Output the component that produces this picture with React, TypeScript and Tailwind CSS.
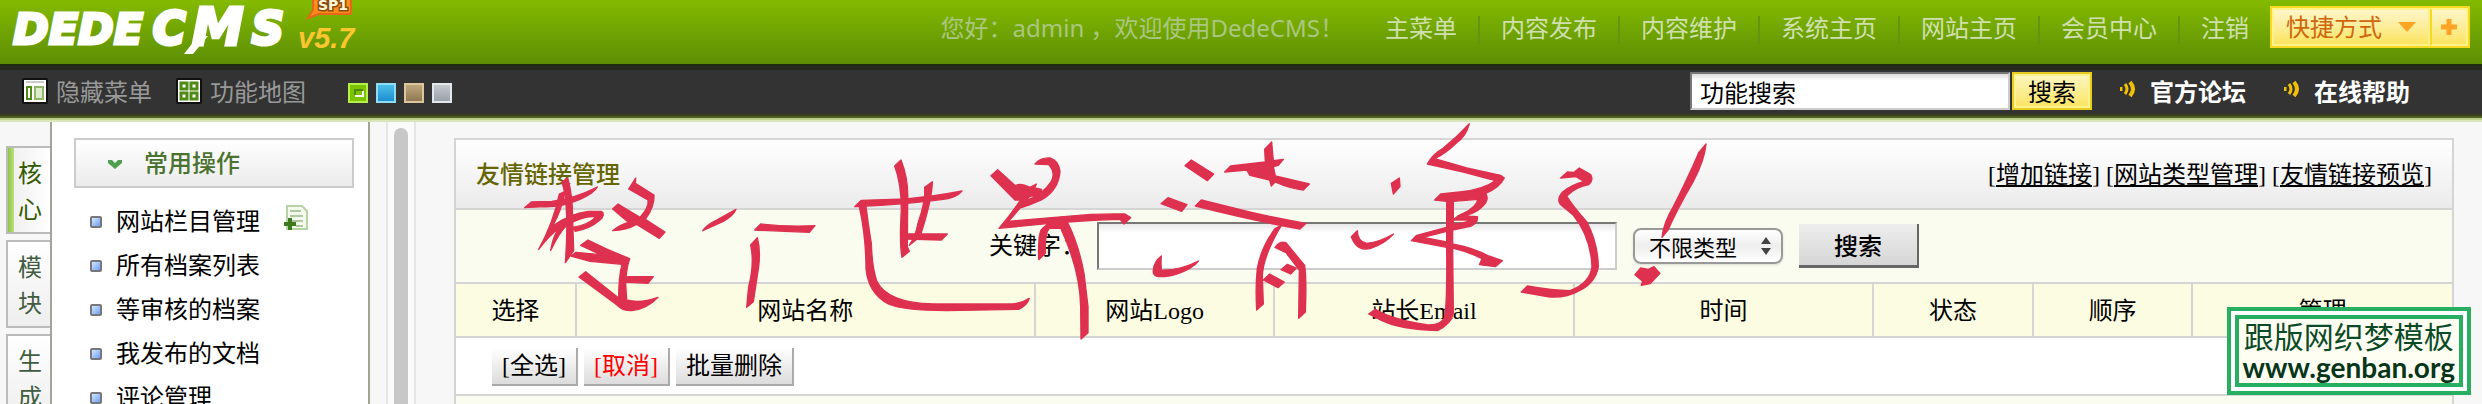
const navLinks = ["主菜单", "内容发布", "内容维护", "系统主页", "网站主页", "会员中心", "注销"];

const tabs = ["核心", "模块", "生成"];

const menuItems = ["网站栏目管理", "所有档案列表", "等审核的档案", "我发布的文档", "评论管理"];

const columns = [
  { name: "选择", width: "w-[6%]" },
  { name: "网站名称", width: "w-[23%]" },
  { name: "网站Logo", width: "w-[12%]" },
  { name: "站长Email", width: "w-[15%]" },
  { name: "时间", width: "w-[15%]" },
  { name: "状态", width: "w-[8%]" },
  { name: "顺序", width: "w-[8%]" },
  { name: "管理", width: "w-[13%]" },
];

function Logo() {
  return (
    <svg width="370" height="64" viewBox="0 0 370 64" className="shrink-0" role="img" aria-label="DedeCMS v5.7 SP1">
      <g fontFamily="DejaVu Sans" fontWeight="700" fontStyle="italic" fill="#fff" stroke="#fff">
        <text x="13" y="44" fontSize="43" strokeWidth="3">DEDE</text>
        <text x="153" y="44" fontSize="44" strokeWidth="4">C</text>
        <text x="192" y="45" fontSize="52" strokeWidth="3">M</text>
        <text x="252" y="44" fontSize="44" strokeWidth="4">S</text>
      </g>
      <path d="M198 36 L208 36 L193 54 L184 54 Z" fill="#fff" />
      <text x="298" y="48" fontFamily="Liberation Sans" fontWeight="700" fontStyle="italic" fontSize="29" fill="#fbc62f">
        v5.7
      </text>
      <path d="M313 -2 H351 V12 Q351 14 349 14 H319 L308 18 L313 10 Z" fill="#ff8d1c" stroke="#e8661a" strokeWidth="2" />
      <text x="318" y="10" fontFamily="DejaVu Sans" fontWeight="700" fontSize="14" fill="#fff8d8" stroke="#8a4a10" strokeWidth="3" paintOrder="stroke">
        SP1
      </text>
    </svg>
  );
}

function SoundIcon() {
  return (
    <svg width="16" height="18" viewBox="0 0 16 18" fill="none" stroke="#f0bf08" className="mb-1">
      <path d="M1 7v4" strokeWidth="3" />
      <path d="M5 4q4 5 0 10" strokeWidth="3" />
      <path d="M10 2q6 7 0 14" strokeWidth="4" />
    </svg>
  );
}

function PanelIcon() {
  return (
    <svg width="26" height="26" viewBox="0 0 26 26">
      <rect width="26" height="26" rx="2" fill="#111" />
      <rect x="2" y="2" width="22" height="22" fill="#fff" />
      <path d="M4 4h18" stroke="#ccc" strokeWidth="2" />
      <rect x="5" y="9" width="4" height="12" fill="none" stroke="#4e8a14" strokeWidth="2" />
      <rect x="13" y="9" width="8" height="12" fill="#dceccb" stroke="#8fb765" strokeWidth="2" />
    </svg>
  );
}

function MapIcon() {
  return (
    <svg width="26" height="26" viewBox="0 0 26 26">
      <rect width="26" height="26" rx="2" fill="#111" />
      <rect x="2" y="2" width="22" height="22" fill="#fff" />
      <g fill="#fff" stroke="#4e8a14" strokeWidth="3">
        <rect x="5" y="5" width="6" height="6" />
        <rect x="15" y="5" width="6" height="6" />
        <rect x="5" y="15" width="6" height="6" />
        <rect x="15" y="15" width="6" height="6" />
      </g>
    </svg>
  );
}

function Header() {
  return (
    <header className="flex h-16 shrink-0 items-start bg-linear-to-b from-[#84ba00] to-[#5d8e05] pr-3 font-['Noto_Sans','Noto_Sans_CJK_SC',sans-serif] text-2xl leading-6 whitespace-nowrap">
      <Logo />
      <p className="mt-4 mr-5 ml-auto text-[#aac780]">您好：admin ，欢迎使用DedeCMS！</p>
      <nav className="mt-4 flex divide-x-2 divide-[#649510]">
        {navLinks.map((link) => (
          <a key={link} href="#" className="h-7 px-[21px] text-[#cfe0ae]">
            {link}
          </a>
        ))}
      </nav>
      <div className="mt-[6px] flex h-[42px] border-2 border-[#f8d820] text-[#d0660c]">
        <button className="flex items-center gap-4 border-2 border-[#fdf38c] bg-linear-to-b from-[#fdf6c8] to-[#fbe45c] px-3">
          快捷方式
          <svg width="18" height="10" viewBox="0 0 18 10">
            <path d="M0 0h18L9 10z" fill="#ffa526" />
          </svg>
        </button>
        <button aria-label="添加" className="border-2 border-[#fdf38c] border-l-[#f8d820] bg-linear-to-b from-[#fdf6c8] to-[#fbe45c] px-2">
          <svg width="18" height="18" viewBox="0 0 18 18" stroke="#ffa526" strokeWidth="5">
            <path d="M9 1v16M1 9h16" />
          </svg>
        </button>
      </div>
    </header>
  );
}

function Toolbar() {
  return (
    <div className="flex h-[58px] shrink-0 items-center bg-[linear-gradient(#1e2c10_2px,#282a20_2px_6px,#333_6px_50px,#394018_50px_52px,#4e6321_52px_54px,#bcd08c_54px_56px,#dae6b9_56px)] pr-[72px] pb-1 pl-[22px] font-['Noto_Sans_CJK_SC',sans-serif] text-2xl leading-6 whitespace-nowrap">
      <a href="#" className="mr-6 flex items-center gap-2 text-[#999]">
        <PanelIcon />
        隐藏菜单
      </a>
      <a href="#" className="mr-[42px] flex items-center gap-2 text-[#999]">
        <MapIcon />
        功能地图
      </a>
      <div className="flex gap-2 pt-1">
        <button aria-label="绿色" className="size-5 border-2 border-[#b6f04a] bg-[#7cc400] p-[2px]">
          <svg width="12" height="12" viewBox="0 0 12 12" fill="none" stroke="#fff" strokeWidth="2">
            <path d="M3 8V3H11" stroke="#4c8a00" />
            <path d="M11 4V9H3" />
          </svg>
        </button>
        <button aria-label="蓝色" className="size-5 border-2 border-[#8fdcf5] bg-linear-to-b from-[#4cbfe8] to-[#1c8ed0]" />
        <button aria-label="棕色" className="size-5 border-2 border-[#dcc79c] bg-linear-to-b from-[#bfa77c] to-[#8f7853]" />
        <button aria-label="灰色" className="size-5 border-2 border-[#e3e6ea] bg-linear-to-b from-[#c5cad0] to-[#9aa1a8]" />
      </div>
      <form className="ml-auto flex items-center">
        <input
          type="text"
          aria-label="功能搜索"
          defaultValue="功能搜索"
          className="mr-[2px] h-[38px] w-80 border-2 border-[#ccc] border-t-[#777] border-l-[#777] bg-white bg-linear-to-b from-[#ddd] to-white to-20% px-2 text-black"
        />
        <button type="button" className="h-[38px] border-2 border-[#eacb20] bg-linear-to-b from-[#fdf6c0] to-[#fbe45c] px-[14px] text-black shadow-[inset_0_0_0_2px_#fdf38c]">
          搜索
        </button>
      </form>
      <a href="#" className="ml-7 flex items-center gap-[14px] font-bold text-white">
        <SoundIcon />
        官方论坛
      </a>
      <a href="#" className="ml-[38px] flex items-center gap-[14px] font-bold text-white">
        <SoundIcon />
        在线帮助
      </a>
    </div>
  );
}

function Sidebar() {
  return (
    <aside className="flex shrink-0">
      <div className="flex w-[50px] flex-col gap-[6px] pt-6 pl-[6px]">
        {tabs.map((tab, i) => (
          <a
            key={tab}
            href="#"
            className={
              i === 0
                ? "relative h-[88px] shrink-0 border-2 border-r-0 border-[#bbb] bg-linear-to-r from-[#eee] to-white pt-2 pl-[10px] leading-9 text-[#335a00]"
                : "h-[88px] shrink-0 border-2 border-r-0 border-[#bbb] bg-linear-to-b from-white to-[#eee] pt-2 pl-[10px] leading-9 text-[#415c41]"
            }
          >
            {i === 0 && <span className="absolute inset-y-0 left-0 w-[6px] bg-linear-to-r from-[#8fc63d] to-[#b9df80]" />}
            {tab[0]}
            <br />
            {tab[1]}
          </a>
        ))}
      </div>
      <div className="w-80 border-x-2 border-[#a4a494] bg-white pt-4 pr-[14px] pl-[22px]">
        <h2 className="flex h-[50px] items-center gap-[22px] border-2 border-[#ccc] bg-linear-to-b from-white to-[#ebebeb] pt-[2px] pl-8 font-medium text-[#4a7330]">
          <svg width="14" height="10" viewBox="0 0 14 10">
            <path d="M0 1h4l3 3 3-3h4v3L7 10 0 4z" fill="#4fa04f" />
          </svg>
          常用操作
        </h2>
        <ul className="pt-3">
          {menuItems.map((item, i) => (
            <li key={item} className="flex h-11 items-center pl-4">
              <span className="mr-[14px] size-3 rounded-xs border-2 border-[#777] bg-linear-to-br from-[#d5e6ff] to-[#6fa0f5]" />
              <a href="#">{item}</a>
              {i === 0 && (
                <svg width="24" height="26" viewBox="0 0 24 26" className="mb-2 ml-6">
                  <path d="M3 1H18L23 6V24H3Z" fill="#f4f9ee" stroke="#b7d3a5" strokeWidth="2" />
                  <path d="M6 6h11M6 11h13M8 16h11M12 21h7" stroke="#b0c8a0" strokeWidth="2" />
                  <path d="M6 13v12M0 19h12" stroke="#3d7a1c" strokeWidth="4" />
                </svg>
              )}
            </li>
          ))}
        </ul>
      </div>
      <div className="ml-4 w-[30px] border-x-2 border-[#e6e6e6] bg-[#fafafa] px-[6px] pt-[6px]">
        <div className="h-full rounded-t-full bg-[#c7c7c7]" />
      </div>
    </aside>
  );
}

function LinkPanel() {
  return (
    <section className="border-2 border-[#d5d5d5] bg-white">
      <div className="flex h-[70px] items-center justify-between border-b-2 border-[#d5d5d5] bg-linear-to-b from-white to-[#ebebeb] px-5 pt-[2px]">
        <h1 className="font-medium text-[#666600]">友情链接管理</h1>
        <div className="flex gap-[6px]">
          {["增加链接", "网站类型管理", "友情链接预览"].map((link) => (
            <span key={link}>
              [
              <a href="#" className="underline decoration-2 underline-offset-2">
                {link}
              </a>
              ]
            </span>
          ))}
        </div>
      </div>

      <form className="flex h-[74px] items-center justify-center border-b-2 border-[#d5d5d5] bg-[#f9fcef]">
        <label htmlFor="keyword" className="w-[108px]">
          关键字：
        </label>
        <input
          id="keyword"
          type="text"
          className="h-12 w-[520px] border-2 border-[#ccc] border-t-[#777] border-l-[#777] bg-white bg-linear-to-b from-[#e8e8e8] to-white to-20% px-2"
        />
        <div className="relative ml-4">
          <select
            aria-label="类型"
            className="h-9 w-[150px] appearance-none rounded-lg border-2 border-[#999] bg-linear-to-b from-white via-[#eee] to-white pl-[14px] font-['Noto_Sans_CJK_SC',sans-serif] text-[22px] leading-8 shadow-sm"
          >
            <option>不限类型</option>
          </select>
          <svg width="10" height="20" viewBox="0 0 10 20" fill="#444" className="pointer-events-none absolute top-2 right-3">
            <path d="M0 8 5 1l5 7zM0 12l5 7 5-7z" />
          </svg>
        </div>
        <button type="button" className="ml-4 h-11 w-[120px] border-r-2 border-b-[3px] border-[#666] bg-linear-to-b from-[#eee] to-[#d6d6d6] font-['Noto_Sans_CJK_SC',sans-serif] font-medium">
          搜索
        </button>
      </form>

      <div className="border-b-2 border-[#d5d5d5] bg-[#fcfce2]">
        <table className="w-full table-fixed">
          <thead>
            <tr className="h-[52px] divide-x-2 divide-[#d5d5d5]">
              {columns.map((col) => (
                <th key={col.name} scope="col" className={`${col.width} pt-[2px] font-normal`}>
                  {col.name}
                </th>
              ))}
            </tr>
          </thead>
        </table>
      </div>

      <div className="flex gap-[6px] border-b-2 border-[#d5d5d5] px-9 pt-[10px] pb-2">
        <button className="h-[38px] border-r-2 border-b-2 border-[#aaa] bg-linear-to-b from-white to-[#dcdcdc] px-[10px]">[全选]</button>
        <button className="h-[38px] border-r-2 border-b-2 border-[#aaa] bg-linear-to-b from-white to-[#dcdcdc] px-[10px] text-[#f00]">[取消]</button>
        <button className="h-[38px] border-r-2 border-b-2 border-[#aaa] bg-linear-to-b from-white to-[#dcdcdc] px-[10px]">批量删除</button>
      </div>
      <div className="h-12 bg-[#f9fcef]" />
    </section>
  );
}

// red pen scribbled over the panel
function Scribble() {
  return (
    <svg
      viewBox="0 0 3600 660"
      width="1200"
      height="220"
      fill="#de314f"
      stroke="#de314f"
      strokeWidth="4"
      strokeLinejoin="round"
      className="pointer-events-none absolute top-[120px] left-[520px]"
      aria-hidden="true"
    >
      <path d="M126 186L143 174Q158 225 158 300L161 392L136 428Q142 350 140 290Q138 220 126 186Z" />
      <path d="M14 263L34 246L95 244Q160 237 232 201Q222 220 180 238Q125 262 70 260Z" />
      <path d="M118 222L135 214Q125 270 98 318Q150 280 205 274L244 274Q258 282 240 300Q210 326 166 334L158 322Q205 316 228 290Q190 286 140 316Q118 338 92 391Q100 345 118 324Q88 346 56 388Q100 310 118 222Z" />
      <path d="M326 207L347 174L346 190L402 225Q404 260 376 298L435 336L418 355L350 313Q320 330 278 332Q300 314 325 307L278 267L294 252L360 292Q388 262 384 240Z" />
      <path d="M182 376L204 360L262 388L329 416Q318 450 317 492L320 540Q360 552 414 532Q380 568 335 572Q308 573 290 554L177 471L197 455L296 534Q296 470 306 433L210 424L153 408L168 397L242 404Z" />
      <path d="M314 470L400 470L384 490L312 486Z" />
      <path d="M548 332Q560 314 590 300L648 268Q640 288 610 304Z" />
      <path d="M704 330L722 312Q800 321 885 317L868 337Q780 334 704 330Z" />
      <path d="M692 375L712 353Q722 390 716 440L700 545L680 562L686 500Q704 430 692 375Z" />

      <g transform="translate(900 0)">
        <path d="M224 138L243 120Q266 180 263 240L262 380L268 394L246 412Q238 370 244 270Q244 190 224 138Z" />
        <path d="M104 260L124 241L260 237Q350 228 426 213Q408 234 370 238Q250 254 138 258Q144 310 154 370Q156 440 170 482Q200 548 340 552L575 552Q606 550 628 535Q622 556 596 568L380 572Q250 572 205 552Q145 520 138 446Q138 350 118 260Z" />
        <path d="M314 202L337 185Q336 240 300 350L268 376Q286 350 294 310Q318 240 314 202Z" />
        <path d="M258 342L382 342L364 360L260 357Z" />
        <path d="M513 167L533 149L586 197Q600 188 630 202L649 192L644 204L665 208L655 228L632 228L612 244Q668 226 694 184Q708 158 686 134L645 132Q662 112 690 114Q716 122 720 154Q716 210 664 240Q630 256 600 264L566 304L740 289Q830 280 915 282L932 293L912 312L900 298Q820 300 742 306Q775 370 792 460L804 560L804 638L783 657L782 560Q780 450 722 324L688 325Q674 340 676 400L656 419Q654 360 662 332Q674 316 690 310L537 325Q570 286 602 240L585 240Z" />
      </g>

      <g transform="translate(1740 0)">
        <path d="M255 137L274 120L341 162L322 182Z" />
        <path d="M374 156L392 138L496 126L494 88L515 66L520 122L550 118L535 136L520 140L526 168L628 192L610 210Q570 206 525 186L514 198L509 180L450 166L440 150L374 156Z" />
        <path d="M183 251L204 233L261 254L245 274Z" />
        <path d="M286 258L304 240L400 264Q500 290 618 310L600 327Q480 306 286 258Z" />
        <path d="M160 450Q162 425 184 408Q182 430 184 450Q240 452 295 423Q278 446 230 462Q190 474 168 468Q158 462 160 450Z" />
        <path d="M525 326L544 316Q488 410 487 470L490 552L470 570Q466 500 472 445Q484 380 525 326Z" />
        <path d="M525 382Q540 362 558 368L580 395L614 436Q620 480 616 576L596 595L598 450L558 398Z" />
        <path d="M543 449L562 433L589 444L572 462ZM490 480L509 462L553 486L534 503Z" />
      </g>

      <g transform="translate(2460 0)">
        <path d="M154 190L178 174L180 200L160 222Z" />
        <path d="M34 350L52 332Q52 364 80 370Q120 366 160 342Q136 370 90 386Q50 394 34 350Z" />
        <path d="M388 11Q378 50 350 68Q320 98 284 116L380 144L482 166L493 174Q478 204 437 220Q450 240 425 262Q404 282 370 288L412 290Q416 306 394 318L338 330L338 372Q400 384 446 408L487 422L466 440L418 434L426 416Q382 394 338 384L340 580Q334 612 292 632Q180 628 126 602L86 582L106 568Q160 600 260 614Q296 618 312 596Q322 570 320 382L214 362L230 346L320 322L320 244L284 240L302 222L360 216Q430 208 466 182L370 156L262 132Q276 104 310 84Q350 52 388 11ZM340 244L340 312Q376 310 390 300L340 300Q352 286 370 280Q408 262 414 238ZM320 334L250 352L320 366Z" fillRule="evenodd" />
        <path d="M662 174L682 156L702 157L718 144L752 164Q762 180 746 194Q710 200 680 228Q700 260 740 305Q774 370 775 440Q766 490 718 512Q680 534 630 531L544 516L562 498Q640 512 690 512Q750 490 756 440Q752 350 700 286L660 252Q650 236 668 216Q690 196 732 184L708 170Z" />
        <path d="M1076 98L1098 72Q1094 120 1060 184Q1010 270 984 330L966 352Q970 310 1000 260Q1050 160 1076 98Z" />
        <path d="M885 464L902 444L925 448L942 440L960 460L930 491L904 496L908 484Z" />
      </g>
    </svg>
  );
}

export default function App() {
  return (
    <div className="relative flex h-screen flex-col overflow-hidden bg-[#f7f7f7] font-['Liberation_Serif','Noto_Sans_CJK_SC',serif] text-2xl leading-8 text-black">
      <Header />
      <Toolbar />
      <div className="flex min-h-0 flex-1">
        <Sidebar />
        <main className="min-w-0 flex-1 pt-4 pr-7 pl-[38px]">
          <LinkPanel />
        </main>
      </div>
      <Scribble />
      <div className="absolute right-[11px] bottom-[9px] border-4 border-[#27ae60] bg-white p-1 text-center text-[#0b4a26]">
        <div className="border-4 border-[#27ae60] bg-[#fffef2] px-1 font-['Noto_Sans_CJK_SC',sans-serif]">
          <p className="text-[30px] leading-8">跟版网织梦模板</p>
          <p className="font-['Lato',sans-serif] text-[28px] leading-8 font-bold text-[#06351a]">www.genban.org</p>
        </div>
      </div>
    </div>
  );
}
